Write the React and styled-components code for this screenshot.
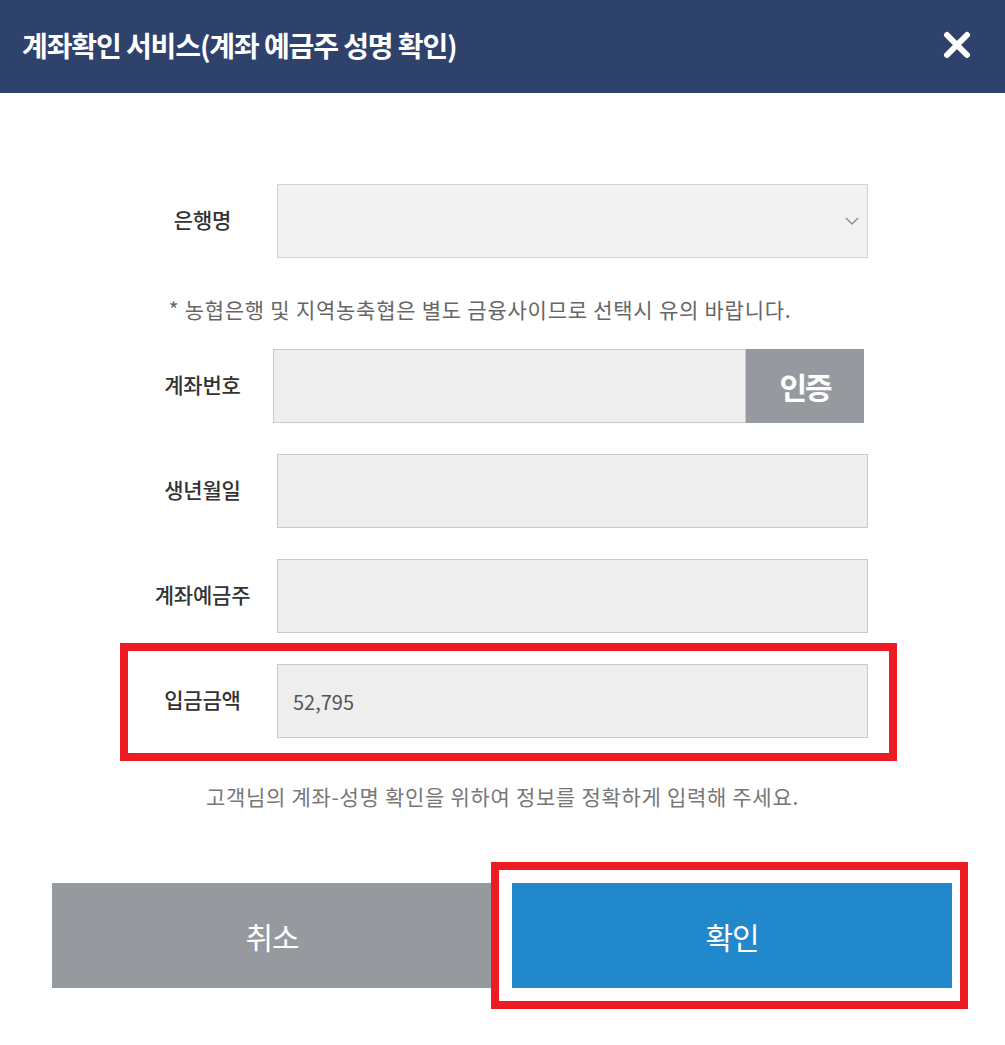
import React from "react";
import styled, { createGlobalStyle, css } from "styled-components";

const GlobalStyle = createGlobalStyle`
  body {
    margin: 0;
    background: #fff;
    font-family: "Noto Sans CJK KR", "Noto Sans", sans-serif;
  }
`;

const Highlight = css`
  position: relative;
  &::after {
    content: "";
    position: absolute;
    border: 8px solid #ed1c24;
    pointer-events: none;
  }
`;

function App() {
  return (
    <>
      <GlobalStyle />
      <Dialog>
        <Header>
          <Title>계좌확인 서비스(계좌 예금주 성명 확인)</Title>
          <CloseButton aria-label="닫기">
            <svg width="28" height="28" viewBox="0 0 28 28">
              <path
                d="M4 4 L24 24 M24 4 L4 24"
                stroke="#fff"
                strokeWidth="6"
                strokeLinecap="round"
              />
            </svg>
          </CloseButton>
        </Header>

        <Body>
          <Form>
            <Field>
              <Label>은행명</Label>
              <SelectBox>
                <svg width="14" height="8" viewBox="0 0 14 8">
                  <path d="M1 1 L7 7 L13 1" fill="none" stroke="#8a8a8a" strokeWidth="1.4" />
                </svg>
              </SelectBox>
            </Field>

            <Note>* 농협은행 및 지역농축협은 별도 금융사이므로 선택시 유의 바랍니다.</Note>

            <Field>
              <Label>계좌번호</Label>
              <InputGroup>
                <Input readOnly value="" />
                <AuthButton>인증</AuthButton>
              </InputGroup>
            </Field>

            <Field $gap>
              <Label>생년월일</Label>
              <Input readOnly value="" />
            </Field>

            <Field $gap>
              <Label>계좌예금주</Label>
              <Input readOnly value="" />
            </Field>

            <Field $gap $highlight>
              <Label>입금금액</Label>
              <Input readOnly value="52,795" />
            </Field>
          </Form>

          <Info>고객님의 계좌-성명 확인을 위하여 정보를 정확하게 입력해 주세요.</Info>

          <Actions>
            <ActionButton $variant="cancel">취소</ActionButton>
            <ConfirmWrap>
              <ActionButton $variant="confirm">확인</ActionButton>
            </ConfirmWrap>
          </Actions>
        </Body>
      </Dialog>
    </>
  );
}

const Dialog = styled.div`
  width: 1005px;
  min-height: 1045px;
  background: #fff;
`;

const Header = styled.header`
  display: flex;
  align-items: center;
  justify-content: space-between;
  height: 93px;
  padding: 0 34px 0 22px;
  box-sizing: border-box;
  background: #2e426c;
`;

const Title = styled.h1`
  margin: 0;
  color: #fff;
  font-size: 28px;
  font-weight: 700;
  letter-spacing: -1.1px;
  line-height: 1;
  position: relative;
  top: -2px;
`;

const CloseButton = styled.button`
  display: flex;
  padding: 0;
  border: 0;
  background: none;
  cursor: pointer;
  position: relative;
  top: -2px;
`;

const Body = styled.div`
  padding-top: 91px;
`;

const Form = styled.div`
  margin-left: 128px;
  width: 740px;
`;

const Field = styled.div`
  display: flex;
  align-items: center;
  height: 74px;
  margin-top: ${(p) => (p.$gap ? "31px" : "0")};
  ${(p) =>
    p.$highlight &&
    css`
      ${Highlight}
      &::after {
        top: -21px;
        bottom: -23px;
        left: -8px;
        right: -29px;
      }
    `}
`;

const Label = styled.div`
  width: 149px;
  flex-shrink: 0;
  text-align: center;
  color: #333;
  font-size: 21px;
  font-weight: 500;
  letter-spacing: -0.2px;
  position: relative;
  top: -2px;
`;

const fieldBox = css`
  height: 74px;
  box-sizing: border-box;
  border: 1px solid #c9c9c9;
  background: #eeeeee;
`;

const SelectBox = styled.div`
  ${fieldBox}
  flex: 1;
  display: flex;
  align-items: center;
  justify-content: flex-end;
  padding-right: 8px;
  background: #f2f2f2;
  border-color: #d2d2d2;
`;

const Input = styled.input`
  ${fieldBox}
  flex: 1;
  min-width: 0;
  margin: 0;
  padding: 0 15px;
  color: #555;
  font-family: "Noto Sans CJK KR", "Noto Sans", sans-serif;
  font-size: 20px;
  letter-spacing: 0;
  outline: none;
`;

const InputGroup = styled.div`
  flex: 1;
  display: flex;
  margin: 0 4px 0 -4px;
`;

const AuthButton = styled.button`
  width: 118px;
  height: 74px;
  padding: 0;
  border: 0;
  background: #969a9e;
  color: #fff;
  font-family: "Noto Sans CJK KR", "Noto Sans", sans-serif;
  font-size: 30px;
  font-weight: 700;
  letter-spacing: -2px;
  cursor: pointer;
`;

const Note = styled.p`
  margin: 36px 45px 25px -128px;
  width: 960px;
  text-align: center;
  color: #666;
  font-size: 21px;
  line-height: 30px;
  letter-spacing: 0.75px;
`;

const Info = styled.p`
  margin: 43px 0 72px;
  text-align: center;
  color: #777;
  font-size: 21px;
  line-height: 30px;
  letter-spacing: 0.7px;
`;

const Actions = styled.div`
  display: flex;
  gap: 20px;
  padding: 0 53px 0 52px;
`;

const ConfirmWrap = styled.div`
  ${Highlight}
  flex: 1;
  display: flex;
  &::after {
    top: -21px;
    bottom: -21px;
    left: -21px;
    right: -16px;
  }
`;

const ActionButton = styled.button`
  flex: 1;
  height: 105px;
  padding: 0;
  border: 0;
  color: #fff;
  font-family: "Noto Sans CJK KR", "Noto Sans", sans-serif;
  font-size: 30px;
  letter-spacing: -1px;
  cursor: pointer;
  background: ${(p) => (p.$variant === "confirm" ? "#2288cc" : "#969a9e")};
`;

export default App;
